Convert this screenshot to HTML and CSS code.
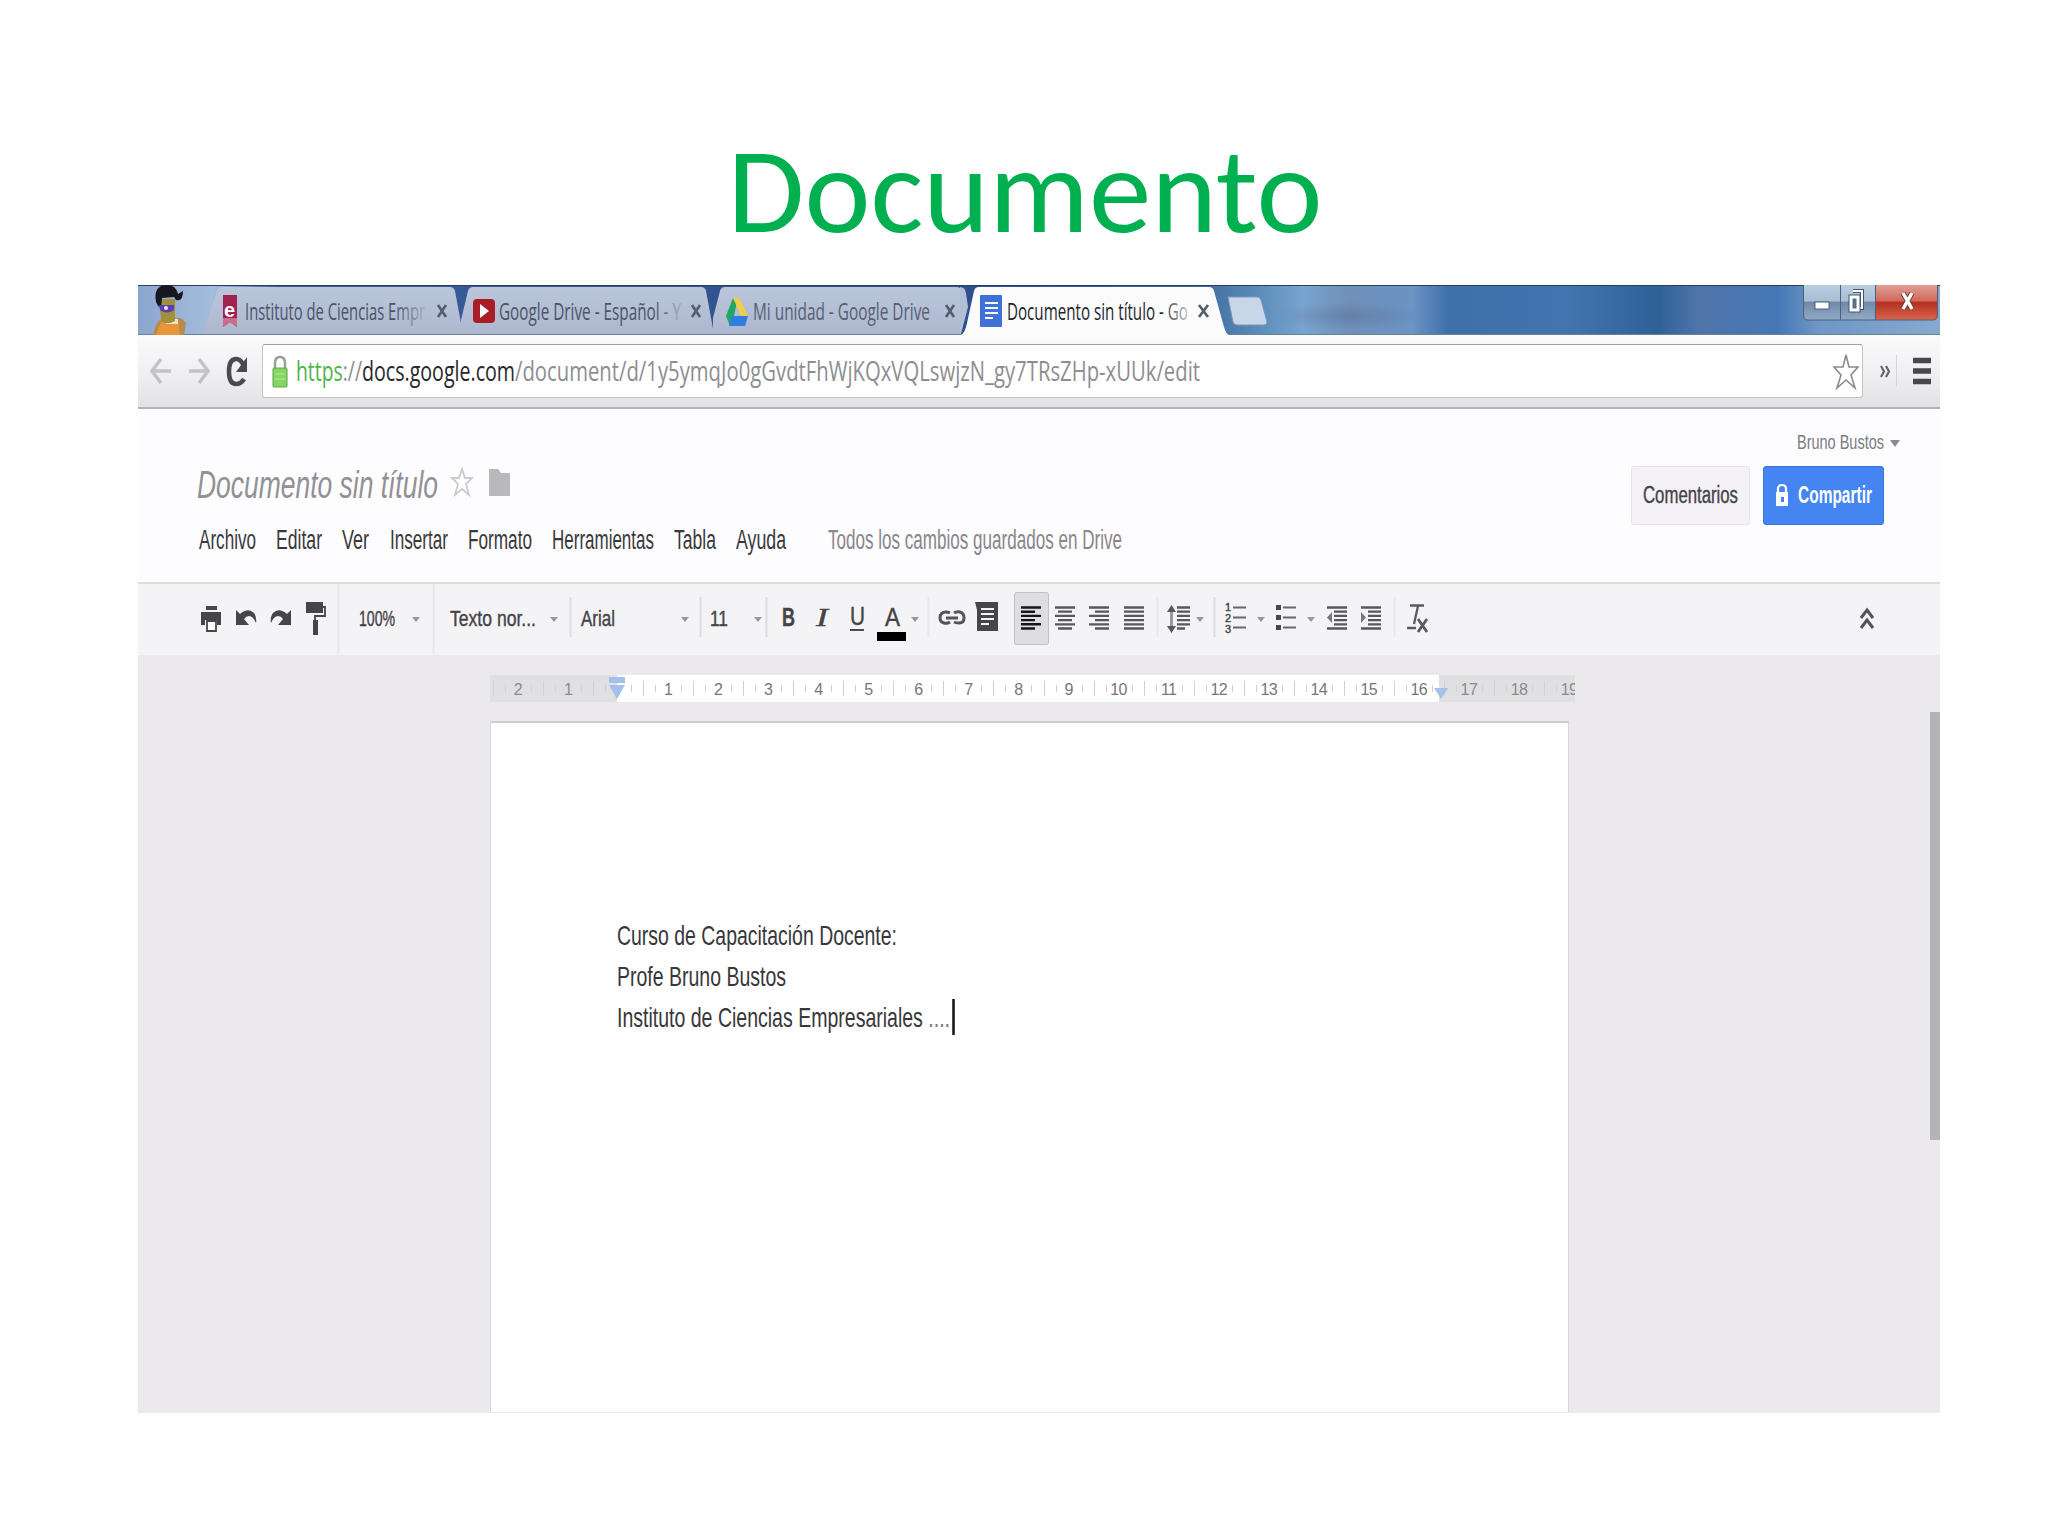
FILE: index.html
```html
<!DOCTYPE html>
<html lang="es">
<head>
<meta charset="utf-8">
<title>Documento</title>
<link rel="stylesheet" href="styles.css">
</head>
<body>
<header class="slide-title">
  <svg width="600" height="160" viewBox="727 110 600 160"><text class="heading" x="727.500" y="231.500" textLength="595" lengthAdjust="spacingAndGlyphs">Documento</text></svg>
</header>
<main class="window">
  <!-- Browser tab strip -->
  <div class="tabstrip">
    <svg width="65" height="50" viewBox="138 285 65 50">
      <path d="M153 335q2-13 10-17h18l5 5-2 12z" fill="#b98b4a"/>
      <path d="M156 335l5-13 17-2 2 15z" fill="#e8943a"/><path d="M166 319h12v5h-12z" fill="#f5e3c8"/>
      <path d="M159 299h16v22q-9 5-14-1z" fill="#a08f3c"/>
      <path d="M156 302q-3-17 11-17 9 0 11 9l5-3q0 11-7 9l-2-3-12 1-1 10-3-2z" fill="#17171f"/>
      <path d="M159 305h15v5q-7 5-14 0z" fill="#5a3fae"/><circle cx="166" cy="308" r="2" fill="#e7e4ff"/>
    </svg>
    <svg width="259" height="50" viewBox="203 285 259 50">
      <defs>
        <linearGradient id="tabfill" x1="0" y1="0" x2="0" y2="1"><stop offset="0" stop-color="#bac6da"/><stop offset="1" stop-color="#adb8d0"/></linearGradient>
        <linearGradient id="fade1" gradientUnits="userSpaceOnUse" x1="395" x2="427" y1="0" y2="0"><stop offset="0" stop-color="#4a5364"/><stop offset="1" stop-color="#4a5364" stop-opacity=".1"/></linearGradient>
        <linearGradient id="fade2" gradientUnits="userSpaceOnUse" x1="655" x2="684" y1="0" y2="0"><stop offset="0" stop-color="#4a5364"/><stop offset="1" stop-color="#4a5364" stop-opacity=".1"/></linearGradient>
        <linearGradient id="fade4" gradientUnits="userSpaceOnUse" x1="1160" x2="1192" y1="0" y2="0"><stop offset="0" stop-color="#22252b"/><stop offset="1" stop-color="#22252b" stop-opacity=".15"/></linearGradient>
      </defs>
      <path d="M203 334L217 291q1-4 5-4H450q4 0 5 4L463 334z" fill="url(#tabfill)"/>
      <path d="M203 334.500H463" stroke="#71839b"/>
      <path d="M223 295h14v32l-7-5-7 5z" fill="#a2214f"/><path d="M223 318h14v9l-7-5-7 5z" fill="#cf6b8b"/>
      <text x="224" y="317" class="fav-letter">e</text>
      <text class="tab" fill="url(#fade1)" x="245" y="320" textLength="180" lengthAdjust="spacingAndGlyphs">Instituto de Ciencias Empr</text>
      <path class="close" d="M438 305l8 12m0-12l-8 12"/>
    </svg>
    <svg width="251" height="50" viewBox="462 285 251 50">
      <path d="M461 334V320L468 291q1-4 5-4H701q4 0 5 4L714 334z" fill="url(#tabfill)"/>
      <path d="M461 334.500H714" stroke="#71839b"/>
      <rect x="473" y="299" width="22" height="24" rx="4" fill="#a81d26"/><path d="M480 304l9 7-9 7z" fill="#fff"/>
      <text class="tab" fill="url(#fade2)" x="499" y="320" textLength="182" lengthAdjust="spacingAndGlyphs">Google Drive - Español - Y</text>
      <path class="close" d="M692 305l8 12m0-12l-8 12"/>
    </svg>
    <svg width="247" height="50" viewBox="713 285 247 50">
      <path d="M713 334V318L720 291q1-4 5-4H957q3 0 4 3V334z" fill="url(#tabfill)"/>
      <path d="M713 334.500H960" stroke="#71839b"/>
      <path d="M733 298l5 0-5 22-3 6-4-10z" fill="#23a566"/><path d="M733 298h6l9 18h-7z" fill="#f0cf45"/><path d="M732 316h16l-3 10h-16z" fill="#2f7de1"/>
      <text class="tab muted" x="753" y="320" textLength="177" lengthAdjust="spacingAndGlyphs">Mi unidad - Google Drive</text>
      <path class="close" d="M946 305l8 12m0-12l-8 12"/>
    </svg>
    <svg width="268" height="50" viewBox="960 285 268 50">
      <path d="M960 287q5 0 6 6l2 14-7 27h-1z" fill="#b1bfd5"/>
      <path d="M961 335Q965 333 967 323L974 291q1-4 5-4H1209q4 0 5 4L1224 327Q1226 334 1229 335z" fill="#fbfbfc"/>
      <rect x="980" y="295" width="22" height="32" rx="1" fill="#3e72d8"/>
      <path d="M985 303h13m-13 5h13m-13 5h13m-13 5h8" stroke="#fff" stroke-width="2.200"/>
      <text class="tab" fill="url(#fade4)" x="1007" y="320" textLength="181" lengthAdjust="spacingAndGlyphs">Documento sin título - Go</text>
      <path class="close" d="M1199 305l9 12m0-12l-9 12"/>
    </svg>
    <svg width="45" height="50" viewBox="1228 285 45 50"><path d="M1228 297h29q3 0 4 3l6 22q0 3-3 3h-27q-3 0-4-3z" fill="#c8d6e8" stroke="#7b98bd"/></svg>
    <svg class="controls" width="137" height="50" viewBox="1803 285 137 50">
      <defs>
        <linearGradient id="glass" x1="0" y1="0" x2="0" y2="1"><stop offset="0" stop-color="#b9cde2"/><stop offset=".45" stop-color="#a9bdd5"/><stop offset=".5" stop-color="#7089a8"/><stop offset="1" stop-color="#91aac5"/></linearGradient>
        <linearGradient id="red" x1="0" y1="0" x2="0" y2="1"><stop offset="0" stop-color="#dfa096"/><stop offset=".45" stop-color="#d2695c"/><stop offset=".5" stop-color="#b5301f"/><stop offset="1" stop-color="#d9654b"/></linearGradient>
      </defs>
      <path d="M1803 285h73v35h-68q-5 0-5-5z" fill="url(#glass)"/>
      <path d="M1876 285h62v30q0 5-5 5h-57z" fill="url(#red)"/>
      <path d="M1803.500 285v30q0 5 5 5h124q5 0 5-5v-30M1840.500 285v35M1875.500 285v35" fill="none" stroke="#4d6078"/>
      <rect x="1815" y="302" width="14" height="7" fill="#fff" stroke="#4f6076"/>
      <path d="M1853 291h9v17h-3" fill="none" stroke="#44566c" stroke-width="4"/><path d="M1853 291h9v17h-3" fill="none" stroke="#fff" stroke-width="2"/>
      <rect x="1851" y="297" width="7" height="13" fill="#44566c" stroke="#44566c" stroke-width="5"/><rect x="1851" y="297" width="7" height="13" fill="#5b6f87" stroke="#fff" stroke-width="3"/>
      <path d="M1903 293l9 16m0-16l-9 16" stroke="#6f3b37" stroke-width="5.500"/><path d="M1903 293l9 16m0-16l-9 16" stroke="#fff" stroke-width="3.500"/>
    </svg>
  </div>
  <!-- Address bar -->
  <div class="addressbar">
    <svg width="124" height="72" viewBox="138 335 124 72">
      <g fill="none" stroke="#c3c2c5" stroke-width="3.500"><path d="M161 359l-9 12 9 12M153 371h18"/><path d="M199 359l9 12-9 12M207 371h-18"/></g>
      <path d="M244 379q-3 5-8 5-7 0-7-12.500t7-12.500q5 0 8 7" fill="none" stroke="#4b4b4e" stroke-width="4.500"/><path d="M247 357v15h-11z" fill="#4b4b4e"/>
    </svg>
    <div class="omnibox">
      <svg width="960" height="52" viewBox="263 345 960 52">
        <path d="M275 369v-6q0-6 5-6t5 6v6" fill="none" stroke="#9a9f98" stroke-width="2.500"/><rect x="273" y="368" width="14" height="19" rx="1" fill="#86d666" stroke="#59a648"/><path d="M275 374h10m-10 5h10" stroke="#b6ec9c"/>
        <text class="url" x="296" y="381" textLength="66" lengthAdjust="spacingAndGlyphs"><tspan class="secure">https</tspan>://</text>
        <text class="url host" x="362" y="381" textLength="153" lengthAdjust="spacingAndGlyphs">docs.google.com</text>
        <text class="url" x="515" y="381" textLength="685" lengthAdjust="spacingAndGlyphs">/document/d/1y5ymqJo0gGvdtFhWjKQxVQLswjzN_gy7TRsZHp-xUUk/edit</text>
      </svg>
      <svg width="40" height="52" viewBox="1822 345 40 52"><path d="M1846 355l3 12h9l-7 8 4 13-9-8-9 8 4-13-7-8h9z" fill="#fff" stroke="#8b8b8e" stroke-width="1.600"/></svg>
    </div>
    <svg width="77" height="72" viewBox="1863 335 77 72">
      <path d="M1881 366l3 5.500-3 5.500m5-11l3 5.500-3 5.500" fill="none" stroke="#666" stroke-width="2.200"/>
      <path d="M1896.500 355v32" stroke="#d5d4d7"/>
      <path d="M1913 360.500h18m-18 10.500h18m-18 10.500h18" stroke="#48484b" stroke-width="5.500"/>
    </svg>
  </div>
  <!-- Document header -->
  <section class="dochead">
    <div class="naming">
      <svg width="330" height="50" viewBox="196 460 330 50">
        <text class="doctitle" x="197" y="498" textLength="241" lengthAdjust="spacingAndGlyphs">Documento sin título</text>
        <path d="M462 469l3 9h7l-6 6 3 11-7-6-7 6 3-11-6-6h7z" fill="none" stroke="#ccc" stroke-width="1.800"/>
        <path d="M489 469h9l3 4h9v23h-21z" fill="#b9b8ba"/>
      </svg>
      <nav class="menu">
        <svg width="57" height="34"><text y="25" textLength="57" lengthAdjust="spacingAndGlyphs">Archivo</text></svg>
        <svg width="46" height="34"><text y="25" textLength="46" lengthAdjust="spacingAndGlyphs">Editar</text></svg>
        <svg width="27" height="34"><text y="25" textLength="27" lengthAdjust="spacingAndGlyphs">Ver</text></svg>
        <svg width="58" height="34"><text y="25" textLength="58" lengthAdjust="spacingAndGlyphs">Insertar</text></svg>
        <svg width="64" height="34"><text y="25" textLength="64" lengthAdjust="spacingAndGlyphs">Formato</text></svg>
        <svg width="102" height="34"><text y="25" textLength="102" lengthAdjust="spacingAndGlyphs">Herramientas</text></svg>
        <svg width="42" height="34"><text y="25" textLength="42" lengthAdjust="spacingAndGlyphs">Tabla</text></svg>
        <svg width="50" height="34"><text y="25" textLength="50" lengthAdjust="spacingAndGlyphs">Ayuda</text></svg>
        <svg class="saved" width="295" height="34"><text y="25" textLength="294" lengthAdjust="spacingAndGlyphs">Todos los cambios guardados en Drive</text></svg>
      </nav>
    </div>
    <div class="account">
      <svg class="user" width="105" height="30" viewBox="1796 428 105 30"><text x="1797" y="449" textLength="87" lengthAdjust="spacingAndGlyphs">Bruno Bustos</text><path d="M1890 440h10l-5 7z" fill="#8b8a8d"/></svg>
      <div class="actions">
        <button class="comments"><svg width="96" height="40"><text y="27" textLength="95" lengthAdjust="spacingAndGlyphs">Comentarios</text></svg></button>
        <button class="share"><svg width="100" height="40" viewBox="1774 475 100 40"><path d="M1778 492v-4q0-4 4-4t4 4v4" fill="none" stroke="#fff" stroke-width="2.200"/><path d="M1776 491h12v14h-12z" fill="#fff"/><path d="M1781 496h3v5h-3z" fill="#4482ee"/><text x="1798" y="502" textLength="74" lengthAdjust="spacingAndGlyphs">Compartir</text></svg></button>
      </div>
    </div>
  </section>
  <!-- Editing toolbar -->
  <div class="toolbar">
    <svg width="200" height="72" viewBox="138 583 200 72">
      <g fill="#464548"><path d="M206 606h11v4h-11zM201 612h20v13h-4v-5h-12v5h-4z"/><path d="M207 621h9v10h-9z" fill="#fff" stroke="#464548" stroke-width="1.800"/>
      <path d="M236 610l4 4q8-7 14-1 3 4 2 10-3-7-7-7-3 0-5 3l5 6h-13z"/><path d="M291 610l-4 4q-8-7-14-1-3 4-2 10 3-7 7-7 3 0 5 3l-5 6h13z"/>
      <path d="M306 602h17v11h-17zM313 620h5v15h-5z"/><path d="M322 607h3v9h-10v6" fill="none" stroke="#464548" stroke-width="1.800"/></g>
    </svg>
    <svg width="95" height="72" viewBox="338 583 95 72"><path class="sep" d="M338.500 584v70"/><text x="359" y="626" textLength="36" lengthAdjust="spacingAndGlyphs">100%</text><path class="caret" d="M412 617h8l-4 5z"/></svg>
    <svg width="137" height="72" viewBox="433 583 137 72"><path class="sep" d="M433.500 584v70"/><text x="450" y="626" textLength="86" lengthAdjust="spacingAndGlyphs">Texto nor...</text><path class="caret" d="M550 617h8l-4 5z"/></svg>
    <svg width="130" height="72" viewBox="570 583 130 72"><path class="sep dark" d="M570.500 597v40"/><text x="581" y="626" textLength="34" lengthAdjust="spacingAndGlyphs">Arial</text><path class="caret" d="M681 617h8l-4 5z"/></svg>
    <svg width="66" height="72" viewBox="700 583 66 72"><path class="sep dark" d="M700.500 597v40"/><text x="710" y="626" textLength="18" lengthAdjust="spacingAndGlyphs">11</text><path class="caret" d="M754 617h8l-4 5z"/></svg>
    <svg width="162" height="72" viewBox="766 583 162 72">
      <path class="sep dark" d="M766.500 597v40"/>
      <text class="b" x="782" y="626" textLength="13" lengthAdjust="spacingAndGlyphs">B</text>
      <text class="i" x="816" y="626" textLength="12" lengthAdjust="spacingAndGlyphs">I</text>
      <text class="letter" x="850" y="625" textLength="15" lengthAdjust="spacingAndGlyphs">U</text><path d="M850 630h14" stroke="#4b4a4d" stroke-width="2"/>
      <text class="letter" x="885" y="626" textLength="15" lengthAdjust="spacingAndGlyphs">A</text><path d="M877 632h29v9h-29z"/>
      <path class="caret" d="M911 617h8l-4 5z"/>
    </svg>
    <svg width="86" height="72" viewBox="928 583 86 72">
      <path class="sep" d="M928.500 597v40"/>
      <path d="M950 622q-3 2-6 1-4-1-4-5 0-6 6-6 2 0 4 1M954 613q3-2 6-1 4 1 4 6 0 5-5 5-3 0-5-1M946 618h12" fill="none" stroke="#555457" stroke-width="3"/>
      <path d="M975 602h23v29h-21v-21z" fill="#464548"/><path d="M981 609h13m-13 5h13m-13 5h13m-13 5h8" stroke="#f3f2f5" stroke-width="2"/>
    </svg>
    <svg width="143" height="72" viewBox="1014 583 143 72">
      <rect x="1014.500" y="592.500" width="34" height="52" rx="2" fill="#dedddf" stroke="#c2c1c4"/>
      <path d="M1021 607.500h20m-20 4.200h14m-14 4.200h20m-20 4.200h14m-14 4.200h20m-20 4.200h14" stroke="#161618" stroke-width="2.400"/>
      <g stroke="#58575a" stroke-width="2.300"><path d="M1055 607.500h20m-17 4.200h14m-17 4.200h20m-17 4.200h14m-17 4.200h20m-17 4.200h14"/><path d="M1089 607.500h20m-14 4.200h14m-20 4.200h20m-14 4.200h14m-20 4.200h20m-14 4.200h14"/><path d="M1124 607.500h20m-20 4.200h20m-20 4.200h20m-20 4.200h20m-20 4.200h20m-20 4.200h20"/></g>
    </svg>
    <svg width="57" height="72" viewBox="1157 583 57 72">
      <path class="sep" d="M1157.500 597v40"/>
      <path d="M1177 607.500h13m-13 4.200h13m-13 4.200h13m-13 4.200h13m-13 4.200h13m-13 4.200h8" stroke="#58575a" stroke-width="2.300"/><path d="M1171.500 610v18" stroke="#9a999c" stroke-width="3"/><path d="M1167 612l4.500-7 4.500 7zM1167 626l4.500 7 4.500-7z" fill="#58575a"/>
      <path class="caret" d="M1196 617h8l-4 5z"/>
    </svg>
    <svg width="180" height="72" viewBox="1214 583 180 72">
      <path class="sep dark" d="M1214.500 597v40"/>
      <g class="nums"><text x="1225" y="611">1</text><text x="1225" y="622">2</text><text x="1225" y="633">3</text></g>
      <g stroke="#68676a" stroke-width="2.200"><path d="M1233 607.500h13m-13 10h13m-13 10h13M1283 607.500h13m-13 10h13m-13 10h13"/><path d="M1276 607.500h5m-5 10h5m-5 10h5" stroke="#48474a" stroke-width="5"/></g>
      <path class="caret" d="M1257 617h8l-4 5zM1307 617h8l-4 5z"/>
      <g stroke="#58575a" stroke-width="2.300"><path d="M1327 607.500h20m-13 4.200h13m-13 4.200h13m-13 4.200h13m-13 4.200h13m-20 4.200h20"/><path d="M1361 607.500h20m-13 4.200h13m-13 4.200h13m-13 4.200h13m-13 4.200h13m-20 4.200h20"/></g>
      <path d="M1332 612v11l-5-5.500zM1361 612v11l5-5.500z" fill="#77767a"/>
    </svg>
    <svg width="40" height="72" viewBox="1394 583 40 72"><path class="sep" d="M1394.500 597v40"/><path d="M1410 605.500h14M1418 606l-4 18M1407 628h9" stroke="#5b5a5d" stroke-width="2.300"/><path d="M1418 619l9 13m0-13l-9 13" stroke="#5b5a5d" stroke-width="2.800"/></svg>
    <svg class="collapse" width="30" height="72" viewBox="1852 583 30 72"><path d="M1861 618l6-8 6 8m-12 10l6-8 6 8" fill="none" stroke="#555457" stroke-width="3"/></svg>
  </div>
  <!-- Workspace -->
  <section class="workspace">
    <div class="ruler">
      <span class="outer">2</span><span class="outer">1</span><span class="zero"></span><span>1</span><span>2</span><span>3</span><span>4</span><span>5</span><span>6</span><span>7</span><span>8</span><span>9</span><span>10</span><span>11</span><span>12</span><span>13</span><span>14</span><span>15</span><span>16</span><span class="outer">17</span><span class="outer">18</span><span class="outer">19</span>
      <svg class="indent left" width="16" height="24"><path d="M0 0h16v6H0zM0 8h16l-8 14z" fill="#a5c0ea"/></svg>
      <svg class="indent right" width="14" height="24"><path d="M0 11h14l-7 11z" fill="#a5c0ea"/></svg>
    </div>
    <article class="page">
      <svg width="345" height="41"><text y="29" textLength="280" lengthAdjust="spacingAndGlyphs">Curso de Capacitación Docente:</text></svg>
      <svg width="345" height="41"><text y="29" textLength="169" lengthAdjust="spacingAndGlyphs">Profe Bruno Bustos</text></svg>
      <svg width="345" height="41"><text y="29" textLength="333" lengthAdjust="spacingAndGlyphs">Instituto de Ciencias Empresariales <tspan class="dots">....</tspan></text><path d="M336.500 1v36" stroke="#111" stroke-width="2.500"/></svg>
    </article>
    <div class="scrollbar"></div>
  </section>
</main>
</body>
</html>
```
FILE: styles.css
```css
* { box-sizing: border-box; }
body { margin: 0; width: 2048px; height: 1536px; background: #fefefe; font-family: "Liberation Sans", Arial, sans-serif; overflow: hidden; }
svg { display: block; flex: none; overflow: visible; }
.slide-title { height: 285px; padding: 110px 0 0 727px; }
.heading { font: 122px Carlito, Lato, sans-serif; fill: #00b050; }

.window { width: 1802px; height: 1128px; margin-left: 138px; display: flex; flex-direction: column; background: #fdfcfe; overflow: hidden; }

.tabstrip { height: 50px; display: flex; border-top: 1px solid #2b3f5c; border-bottom: 1px solid #6c7f98;
  background: radial-gradient(ellipse 75px 14px at 1210px 30px, rgba(88, 104, 138, .4), rgba(88, 104, 138, 0)), linear-gradient(90deg, #8ba6cf 0, #a5bddc 75px, #3a5c98 140px, #2d4f8c 820px, #3f6a9b 1060px, #5487b5 1110px, #78a4cf 1165px, #6f90ba 1210px, #6b93c4 1275px, #3f70aa 1310px, #4274af 1430px, #2e6197 1520px, #4f74aa 1560px, #4577b5 1640px, #6e97c6 1680px, #87a9cf 1802px); }
.tabstrip svg { margin-top: -1px; }
.tabstrip .controls { margin-left: auto; }
.tab { font: 23px "Open Sans", sans-serif; }
.muted { fill: #566073; }
.close { stroke: #555d6b; stroke-width: 2.6px; }
.fav-letter { font: bold 20px "Liberation Sans", sans-serif; fill: #fff; }

.addressbar { height: 74px; display: flex; background: linear-gradient(#fbfbfc, #eeedf0 60%, #e2e1e4); border-bottom: 2px solid #b2b1b4; }
.omnibox { width: 1601px; height: 54px; margin-top: 9px; display: flex; justify-content: space-between; background: #fff; border: 1px solid #c3c2c5; border-top-color: #9f9ea2; border-radius: 3px; }
.url { font: 27px "Open Sans", sans-serif; fill: #8e8d91; }
.secure { fill: #4fb34b; }
.host { fill: #29292c; }

.dochead { height: 173px; padding: 19px 56px 0 58px; display: flex; justify-content: space-between; }
.naming { padding-top: 32px; }
.doctitle { font: italic 38px "Liberation Sans", sans-serif; fill: #929195; }
.menu { display: flex; gap: 20.200px; padding: 14px 0 0 3px; }
.menu text { font-size: 27px; fill: #39383b; }
.menu .saved { margin-left: 21px; }
.menu .saved text { fill: #88878a; }
.account { display: flex; flex-direction: column; align-items: flex-end; }
.user { margin-right: -17px; }
.user text { font-size: 21px; fill: #7c7b7e; }
.actions { display: flex; gap: 13px; padding-top: 8px; }
.actions button { height: 59px; border: 1px solid #e6e4e8; border-radius: 3px; background: #f4f2f6; font-family: inherit; }
.actions .comments { width: 119px; padding: 0 0 0 11px; }
.comments text { font-size: 23px; fill: #454447; stroke: #454447; stroke-width: .4px; }
.actions .share { width: 121px; padding: 0 0 0 10px; background: #4485f2; border-color: #3975dd; }
.share text { font-size: 23px; font-weight: bold; fill: #fff; }

.toolbar { height: 73px; display: flex; background: #f4f3f6; border-top: 2px solid #dedce0; }
.toolbar svg { margin-top: -1px; }
.toolbar text { font-size: 22px; fill: #454447; stroke: #454447; stroke-width: .4px; }
.toolbar .b { font-size: 25px; font-weight: bold; }
.toolbar .i { font: italic 26px "Liberation Serif", serif; stroke-width: .4px; }
.toolbar .letter { font-size: 26px; }
.toolbar .nums text { font-size: 11px; }
.sep { stroke: #e9e8eb; stroke-width: 2px; }
.sep.dark { stroke: #dddce0; }
.caret { fill: #99989c; }
.toolbar .collapse { margin-left: auto; margin-right: 58px; }

.workspace { position: relative; height: 758px; padding: 20px 0 0 352px; background: #ebe9ec; }
.ruler { position: relative; width: 1085px; height: 27px; padding-left: 3px; display: flex; overflow: hidden; color: #77767a; background: linear-gradient(90deg, #e0dfe1 127px, #fff 127px, #fff 949px, #e0dfe1 949px); }
.ruler span { flex: none; width: 50.050px; height: 27px; font-size: 16px; line-height: 29px; letter-spacing: -.6px; text-align: center;
  background: linear-gradient(#d0cfd2, #d0cfd2) 0 6px / 1px 15px no-repeat, linear-gradient(#d0cfd2, #d0cfd2) 12px 10px / 1px 7px no-repeat, linear-gradient(#d0cfd2, #d0cfd2) 38px 10px / 1px 7px no-repeat; }
.ruler .outer { opacity: .8; }
.indent { position: absolute; top: 2px; }
.indent.left { left: 119px; }
.indent.right { left: 944px; }
.page { width: 1079px; height: 691px; margin-top: 19px; padding: 193px 0 0 126px; background: #fefefe; border: 1px solid #d9d7db; border-top: 2px solid #cfcdd1; border-bottom: 0; }
.page text { font-size: 28px; fill: #38373a; }
.page .dots { fill: #77767a; }
.scrollbar { position: absolute; right: 0; top: 57px; width: 10px; height: 428px; background: #b4b3b6; }
```
